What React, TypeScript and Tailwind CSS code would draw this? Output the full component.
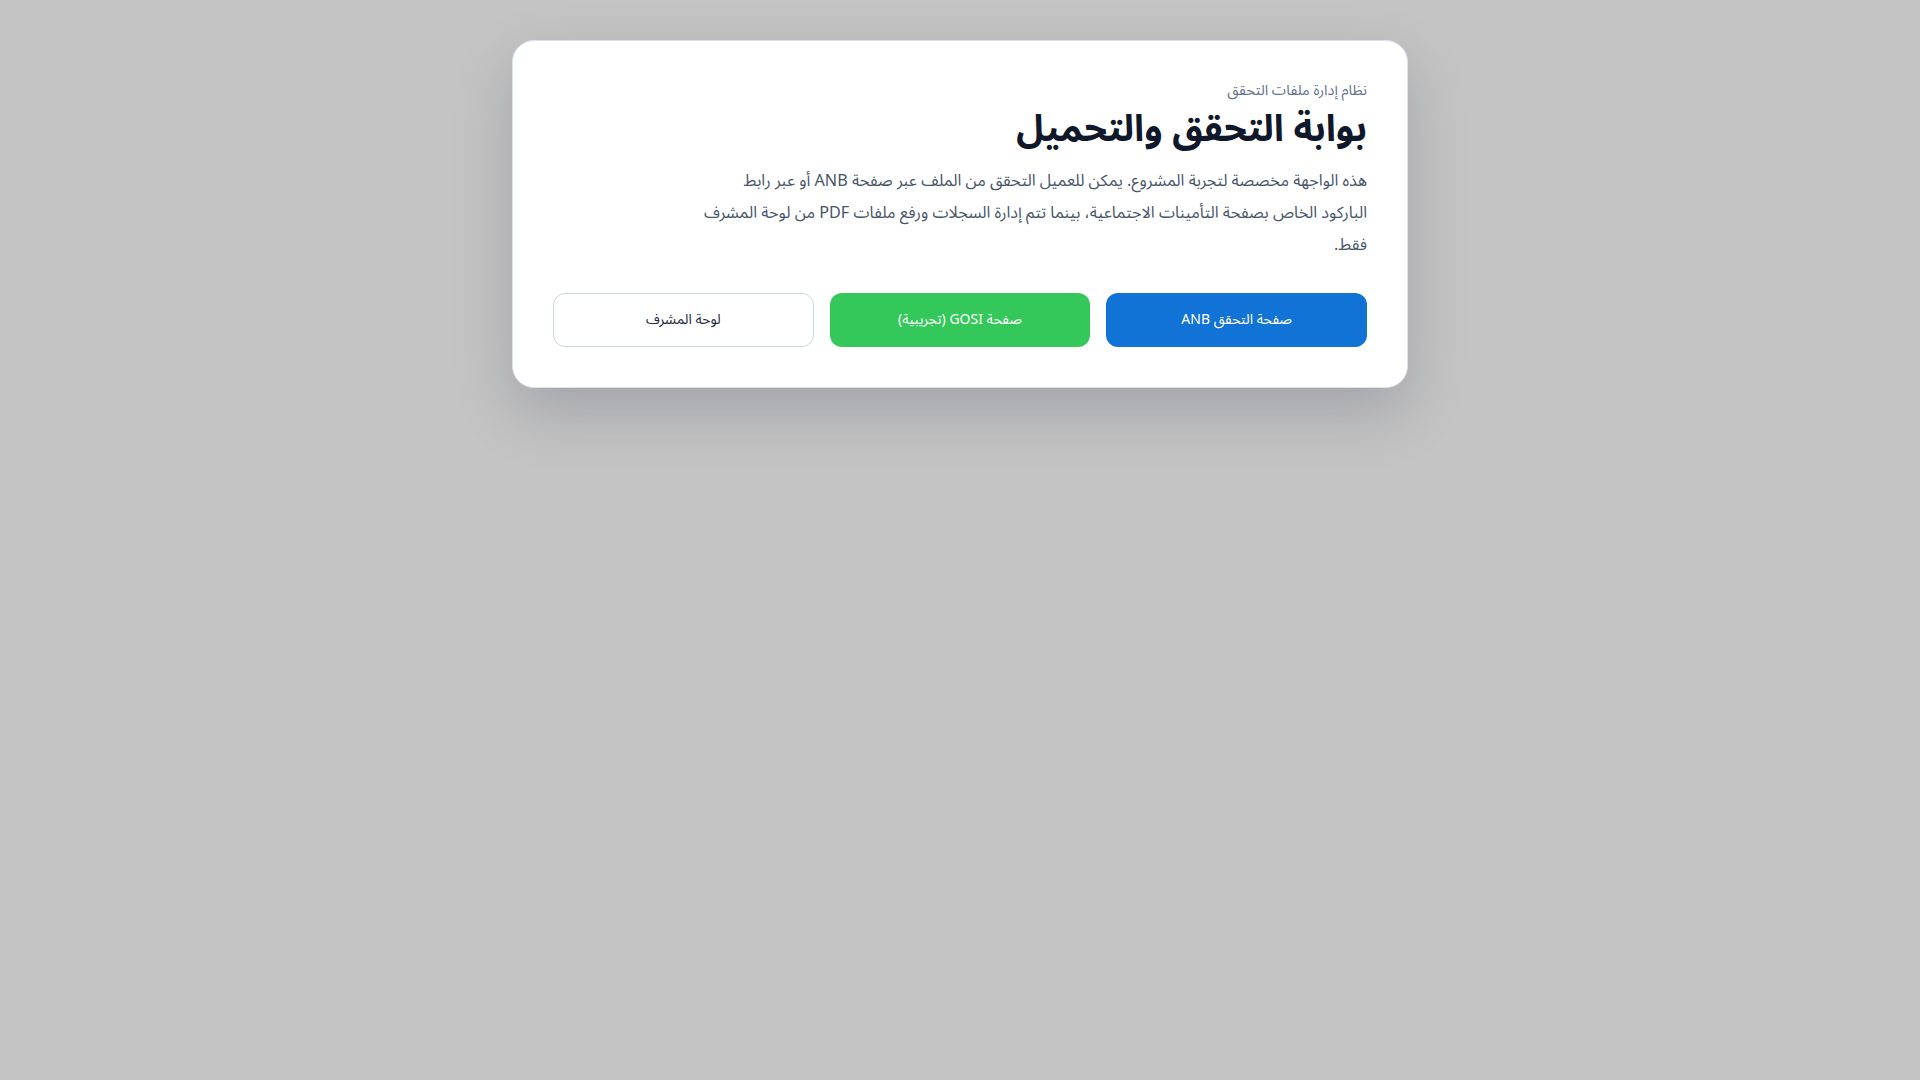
export default function App() {
  return (
    <div
      dir="rtl"
      className="min-h-screen w-full bg-[#c4c4c4] pt-10"
      style={{ fontFamily: '"Noto Sans Arabic", "Noto Sans", "DejaVu Sans", sans-serif' }}
    >
      <div className="mx-auto max-w-[896px] rounded-[22px] border border-[#dbe3ee] bg-white p-10 shadow-[0_24px_60px_rgba(15,23,42,0.18)]">
        <p className="text-[14.5px] leading-5 text-[#64748b]">نظام إدارة ملفات التحقق</p>
        <h1 className="mt-2 text-[37px] font-bold leading-10 text-[#0f172a]">بوابة التحقق والتحميل</h1>
        <p className="mt-4 max-w-[680px] text-[16.2px] leading-8 text-[#475569]">
          هذه الواجهة مخصصة لتجربة المشروع. يمكن للعميل التحقق من الملف عبر صفحة ANB أو عبر رابط
          <br />
          الباركود الخاص بصفحة التأمينات الاجتماعية، بينما تتم إدارة السجلات ورفع ملفات PDF من لوحة المشرف
          <br />
          فقط.
        </p>
        <div className="mt-8 grid grid-cols-3 gap-4">
          <button className="h-[54px] rounded-xl bg-[#1273d6] text-sm font-normal text-white">
            صفحة التحقق ANB
          </button>
          <button className="h-[54px] rounded-xl bg-[#34c759] text-sm font-normal text-white">
            صفحة GOSI (تجريبية)
          </button>
          <button className="h-[54px] rounded-xl border border-[#cbd5e1] bg-white text-sm font-normal text-[#1e293b]">
            لوحة المشرف
          </button>
        </div>
      </div>
    </div>
  );
}
